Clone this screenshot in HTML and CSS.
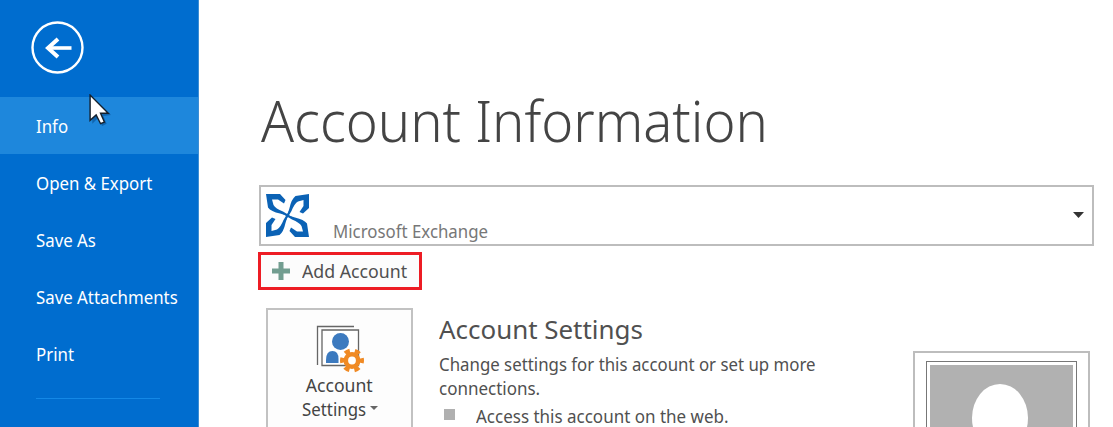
FILE: index.html
```html
<!DOCTYPE html>
<html lang="en">
<head>
<meta charset="utf-8">
<title>Account Information</title>
<link rel="stylesheet" href="styles.css">
</head>
<body>
<div class="app">
  <nav class="sidebar">
    <div class="back">
      <svg width="54" height="54" viewBox="0 0 54 54" fill="none" stroke="#fff">
        <circle cx="27.500" cy="27.500" r="25" stroke-width="2.400"/>
        <path d="M41.500 28H18" stroke-width="3.600"/>
        <path d="M28 19L18 28L28 37" stroke-width="4"/>
      </svg>
    </div>
    <a class="item active"><span class="t">Info</span></a>
    <a class="item"><span class="t">Open &amp; Export</span></a>
    <a class="item"><span class="t">Save As</span></a>
    <a class="item"><span class="t">Save Attachments</span></a>
    <a class="item"><span class="t">Print</span></a>
    <div class="divider"></div>
  </nav>
  <main class="main">
    <h1><span class="t">Account Information</span></h1>
    <div class="select">
      <svg class="exchange" width="43" height="43" viewBox="0 0 43 43" fill="#0b62b5">
        <defs><path id="arm" d="M0 0H14L19.500 6L18 9.500L12 5.500H6L7.500 11Q9.500 14.500 17 17.500L27 23.500L14 19.500Q5 17.500 2 13.500Z"/></defs>
        <use href="#arm"/>
        <use href="#arm" transform="rotate(90 21.500 21.500)"/>
        <use href="#arm" transform="rotate(180 21.500 21.500)"/>
        <use href="#arm" transform="rotate(270 21.500 21.500)"/>
      </svg>
      <span class="provider"><span class="t">Microsoft Exchange</span></span>
      <svg class="caret" width="11" height="6" viewBox="0 0 11 6"><path d="M0 0H11L5.500 6Z" fill="#333"/></svg>
    </div>
    <button class="add">
      <svg width="18" height="18" viewBox="0 0 18 18"><path d="M6.500 0H11.500V6.500H18V11.500H11.500V18H6.500V11.500H0V6.500H6.500Z" fill="#729d90"/></svg>
      <span class="t">Add Account</span>
    </button>
    <div class="row">
      <button class="tile">
        <svg width="48" height="48" viewBox="0 0 48 48">
          <path d="M1.500 40V1.500H38" fill="none" stroke="#666" stroke-width="1.300"/>
          <path d="M6 40.500V5H42.500V40.500Z" fill="#fff" stroke="#666" stroke-width="1.300"/>
          <circle cx="24.500" cy="16.500" r="8.500" fill="#3c7abf"/>
          <path d="M10 38V35Q10 26 16.500 26Q22.500 26 22.500 34V38Z" fill="#3c7abf"/>
          <g fill="none" stroke="#f08a24">
            <circle cx="36" cy="35.500" r="6.200" stroke-width="4.600" fill="#fff"/>
            <circle cx="36" cy="35.500" r="9.800" stroke-width="4.400" stroke-dasharray="5.200 5.063" stroke-dashoffset="2.600"/>
          </g>
        </svg>
        <span class="label"><span class="t l1">Account</span></span>
        <span class="label second"><span class="t l2">Settings</span><i class="mini"></i></span>
      </button>
      <section class="details">
        <h2><span class="t">Account Settings</span></h2>
        <p><span class="t">Change settings for this account or set up more</span></p>
        <p><span class="t p2">connections.</span></p>
        <div class="bullet"><i></i><span class="t p2">Access this account on the web.</span></div>
      </section>
      <div class="photo"><div class="inner"><div class="gray"><div class="head"></div></div></div></div>
    </div>
  </main>
  <svg class="cursor" width="22" height="33" viewBox="0 0 20 30">
    <path d="M3 3V27L8 22L12 29L16 27L13 20L20 19Z" fill="#003c78" opacity=".45"/>
    <path d="M1 1V24L6.500 19L10.500 27L14 25.500L10.500 17.500H17.500Z" fill="#fff" stroke="#14202c" stroke-width="1.300"/>
  </svg>
</div>
</body>
</html>
```
FILE: styles.css
```css
* { box-sizing: border-box; }
body { margin: 0; background: #fff; color: #505050; font: 18px/24px "Noto Sans", sans-serif; }
button { font: inherit; color: inherit; border-radius: 0; padding: 0; }
h1, h2, p { margin: 0; font-weight: 400; }
.t { display: inline-block; white-space: nowrap; transform-origin: 0 50%; transform: scaleX(.935); }
.app { position: relative; display: flex; width: 1113px; height: 427px; overflow: hidden; }
.sidebar { width: 199px; flex: none; background: #006dcf; border-right: 1px solid #3d8ed4; color: #fff; }
.back { height: 97px; padding: 20px 0 0 30px; }
.back svg { display: block; }
.item { display: flex; align-items: center; height: 57px; padding: 1px 0 0 36px; }
.active { background: #1e87dc; }
.divider { height: 1px; width: 124px; margin: 16px 0 0 36px; background: #1488e6; }
.main { flex: 1; min-width: 0; padding-left: 60px; }
h1 { height: 185px; padding: 80px 0 0 2px; font-size: 57px; line-height: 80px; font-weight: 300; color: #444; }
h1 .t { transform: scaleX(.953); }
.select { display: flex; width: 835px; height: 61px; border: 2px solid #bdbdbd; }
.exchange { margin: 7px 0 0 5px; }
.provider { flex: 1; padding: 32px 0 0 24px; color: #777; }
.caret { margin: 25px 8px 0 0; }
.add { display: flex; align-items: center; width: 164px; height: 38px; margin: 6px 0 0 -1px; padding-left: 11px; gap: 12px; border: 3px solid #ed1c24; background: #fcfcfc; }
.add .t { transform: scaleX(.985); }
.row { display: flex; margin: 18px 0 0 7px; align-items: flex-start; }
.tile { display: flex; flex-direction: column; align-items: center; width: 147px; height: 140px; padding-top: 15px; border: 2px solid #c2c2c2; background: #fdfdfd; color: #444; flex: none; }
.label { height: 24px; display: flex; align-items: center; }
.l1 { transform-origin: 50% 50%; transform: scaleX(.98); }
.l2 { margin-left: 2px; }
.mini { border: 4px solid transparent; border-top-color: #666; border-bottom: 0; margin: 0 1px 2px -1px; }
.details { width: 500px; flex: none; padding: 4px 0 0 26px; }
h2 { font-size: 26px; line-height: 34px; margin-bottom: 6px; }
h2 .t { transform: scaleX(.997); }
.p2 { transform: scaleX(.944); }
.bullet { display: flex; margin-top: 4px; padding-left: 5px; gap: 21px; }
.bullet i { width: 11px; height: 11px; margin-top: 5px; background: #b0b0b0; }
.photo { width: 177px; height: 180px; margin-top: 43px; padding: 8px 11px; border: 2px solid #bdbdbd; flex: none; }
.inner { height: 180px; padding: 3px; border: 1px solid #777; }
.gray { height: 170px; padding: 19px 0 0 42px; background: #b1b1b1; }
.head { width: 56px; height: 68px; border-radius: 50%; background: #fff; }
.cursor { position: absolute; left: 89px; top: 94px; }
```
